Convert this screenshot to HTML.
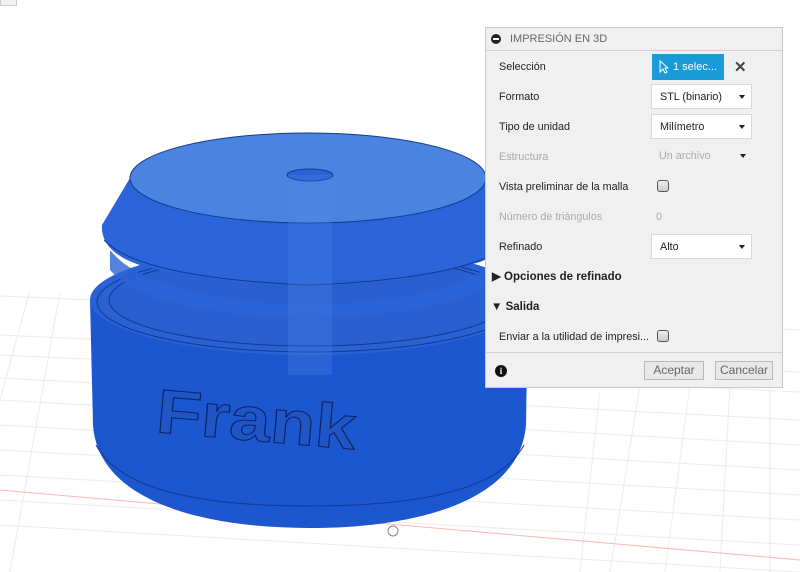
<!DOCTYPE html>
<html><head><meta charset="utf-8"><style>
body{margin:0;width:800px;height:572px;overflow:hidden;background:#fff;font-family:"Liberation Sans",Arial,sans-serif;position:relative}
#panel{position:absolute;left:485px;top:27px;width:298px;height:361px;background:#f0f0f0;border:1px solid #c8c8c8;box-sizing:border-box;font-size:10.8px;color:#222}
.hdr{height:22px;border-bottom:1px solid #d0d0d0;display:flex;align-items:center;color:#666;font-size:11px}
.hdr .min{width:10px;height:10px;border-radius:50%;background:#222;margin:0 9px 0 5px;position:relative}
.hdr .min:after{content:"";position:absolute;left:2px;top:4px;width:6px;height:2px;background:#fff}
.row{position:absolute;left:13px;height:20px;line-height:20px}
.ctl{position:absolute;left:165px;width:101px;height:25px;background:#fff;border:1px solid #d8d8d8;box-sizing:border-box;line-height:24px;padding-left:8px;font-size:10.8px}
.ctl:after{content:"";position:absolute;right:6px;top:10px;border-left:3.5px solid transparent;border-right:3.5px solid transparent;border-top:4px solid #222}
.dis{color:#aaa}
.cb{position:absolute;left:171px;width:12px;height:12px;border:1px solid #555;border-radius:3px;background:linear-gradient(#eee,#ccc);box-sizing:border-box}
.btn{position:absolute;top:333px;height:19px;border:1px solid #b8b8b8;background:#e8e8e8;color:#666;font-size:12px;line-height:17px;text-align:center;box-sizing:border-box}
</style></head><body>
<div style="position:absolute;left:0;top:0;width:15px;height:5px;background:#f2f2f2;border:1px solid #ccc;border-top:none"></div>
<svg width="800" height="572" style="position:absolute;left:0;top:0">
<g stroke="#ececec" stroke-width="1" fill="none">
<path d="M0 296 L800 330"/><path d="M0 335 L800 372"/><path d="M0 378 L800 420"/><path d="M0 425 L800 470"/><path d="M0 475 L800 520"/><path d="M0 525 L800 572"/>
<path d="M0 355 L800 392"/><path d="M0 400 L800 445"/><path d="M0 450 L800 495"/><path d="M0 500 L800 545"/>
<path d="M30 290 L0 400"/><path d="M60 292 L10 572"/><path d="M640 385 L610 572"/><path d="M690 385 L665 572"/><path d="M730 385 L720 572"/><path d="M770 385 L770 572"/><path d="M600 390 L580 572"/>
</g>
<path d="M0 490 L800 560" stroke="#f8b8b8" stroke-width="1"/>
<!-- base -->
<path d="M90 300 L93 425 C98 500 200 528 309 528 C420 528 520 500 526 425 L528 300 Z" fill="#1d57cf"/>
<ellipse cx="309" cy="300" rx="219" ry="55" fill="#2a62d4"/>
<path d="M96 445 C120 490 200 506 309 506 C420 506 500 490 524 445" fill="none" stroke="#123a90" stroke-width="1"/>
<ellipse cx="309" cy="302" rx="212" ry="50" fill="none" stroke="#123a90"/>
<ellipse cx="309" cy="300" rx="200" ry="46" fill="#2b5fd0" stroke="#123a90"/>
<!-- neck -->
<path d="M110 250 Q150 300 309 305 Q470 300 505 250 L505 270 Q470 315 309 318 Q150 315 110 270Z" fill="#2a64d8" opacity=".8"/>
<!-- top cone -->
<path d="M130 178 L102 225 Q100 255 150 268 Q230 285 309 286 Q400 285 480 262 Q510 250 510 225 L486 178 Z" fill="#2a64d8"/>
<path d="M104 240 Q140 278 309 285 Q480 278 512 240" fill="none" stroke="#123a90"/>
<ellipse cx="308" cy="178" rx="178" ry="45" fill="#4b83e0" stroke="#123a90"/>
<ellipse cx="310" cy="175" rx="23" ry="6" fill="#2a62d4" stroke="#123a90"/>
<rect x="288" y="175" width="44" height="200" fill="#4f86e2" opacity=".25"/>
<!-- text -->
<text x="155" y="432" transform="rotate(5 155 432)" textLength="200" lengthAdjust="spacingAndGlyphs" font-family="Liberation Sans" font-weight="bold" font-size="62" fill="#1f55c4" stroke="#0a2260" stroke-width="1">Frank</text>
<circle cx="393" cy="531" r="5" fill="none" stroke="#888"/>
</svg>
<div id="panel">
<div class="hdr"><div class="min"></div>IMPRESIÓN EN 3D</div>
<div class="row" style="top:29px">Selección</div>
<div style="position:absolute;left:166px;top:26px;width:72px;height:26px;background:#1a9ad6;color:#fff;line-height:26px;font-size:11px;padding-left:21px;box-sizing:border-box">1 selec...
<svg width="10" height="14" style="position:absolute;left:7px;top:6px"><path d="M1 1 L1 12 L4 9 L6 13 L8 12 L6 8 L9 8 Z" fill="#1a9ad6" stroke="#fff"/></svg></div>
<div style="position:absolute;left:248px;top:30px;font-size:15px;color:#444;font-weight:bold">✕</div>
<div class="row" style="top:59px">Formato</div><div class="ctl" style="top:56px">STL (binario)</div>
<div class="row" style="top:89px">Tipo de unidad</div><div class="ctl" style="top:86px">Milímetro</div>
<div class="row dis" style="top:119px">Estructura</div><div class="ctl dis" style="top:116px;background:none;border:none;color:#aaa">Un archivo</div>
<div class="row" style="top:149px">Vista preliminar de la malla</div><div class="cb" style="top:152px"></div>
<div class="row dis" style="top:179px">Número de triángulos</div><div class="row dis" style="top:179px;left:170px">0</div>
<div class="row" style="top:209px">Refinado</div><div class="ctl" style="top:206px">Alto</div>
<div class="row" style="top:239px;left:6px;font-weight:bold;font-size:11.5px">▶ Opciones de refinado</div>
<div class="row" style="top:269px;left:5px;font-weight:bold;font-size:11.5px">▼ Salida</div>
<div class="row" style="top:299px">Enviar a la utilidad de impresi...</div><div class="cb" style="top:302px"></div>
<div style="position:absolute;left:0;right:0;top:324px;border-top:1px solid #d0d0d0"></div>
<div style="position:absolute;left:9px;top:337px;width:12px;height:12px;border-radius:50%;background:#111;color:#fff;font-size:9px;font-weight:bold;text-align:center;line-height:12px;font-family:'Liberation Serif',serif">i</div>
<div class="btn" style="left:158px;width:60px">Aceptar</div>
<div class="btn" style="left:229px;width:58px">Cancelar</div>
</div>
</body></html>
